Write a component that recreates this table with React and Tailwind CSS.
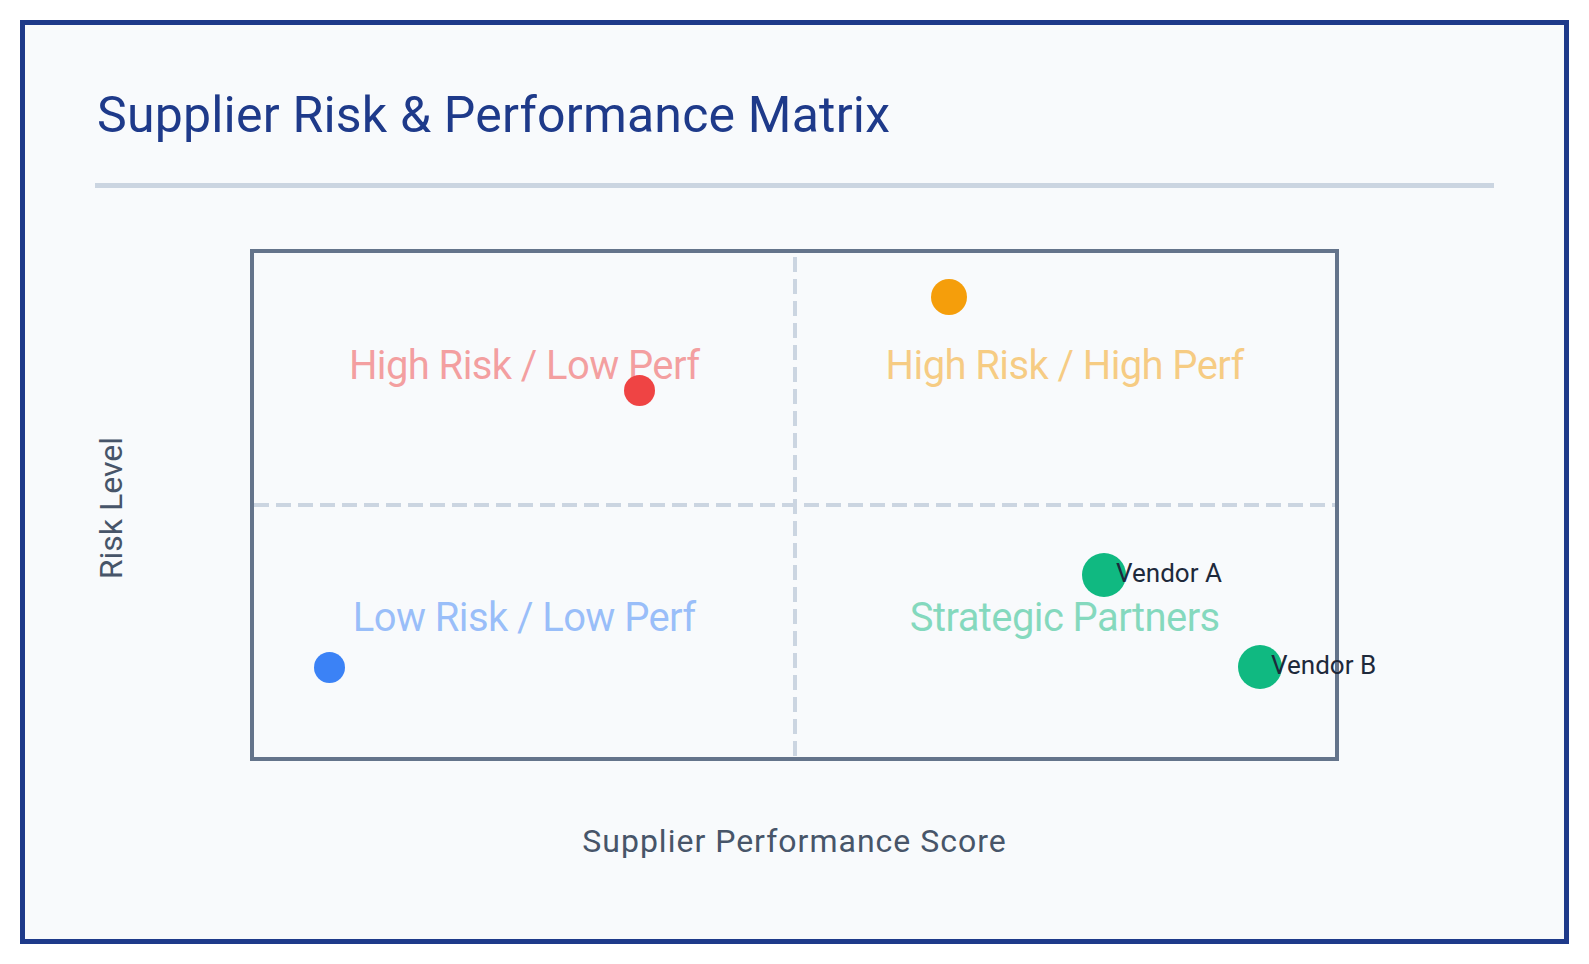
import React from "react";

const quadrants = [
  { label: "High Risk / Low Perf", color: "text-[#ef4444]/50" },
  { label: "High Risk / High Perf", color: "text-[#f59e0b]/50" },
  { label: "Low Risk / Low Perf", color: "text-[#3b82f6]/50" },
  { label: "Strategic Partners", color: "text-[#10b981]/50" },
];

// points are placed inside the chart's inner area (1081 x 504)
const points = [
  { id: "p1", dot: "left-[370px] top-[122px] size-[31px] bg-[#ef4444]" },
  { id: "p2", dot: "left-[677px] top-[26px] size-[36px] bg-[#f59e0b]" },
  { id: "p3", dot: "left-[60px] top-[399px] size-[31px] bg-[#3b82f6]" },
  {
    id: "va",
    dot: "left-[828px] top-[300px] size-[44px] bg-[#10b981]",
    name: "Vendor A",
    text: "left-[862px] top-[307px]",
  },
  {
    id: "vb",
    dot: "left-[984px] top-[392px] size-[44px] bg-[#10b981]",
    name: "Vendor B",
    text: "left-[1017px] top-[399px]",
  },
];

const App = () => {
  return (
    <div className="bg-white p-[20px] font-['Roboto',sans-serif]">
      <div className="h-[924px] border-[5px] border-[#1e3a8a] bg-[#f8fafc] px-[70px] pt-[65px]">
        <h1 className="pl-[2px] text-[50px] leading-none font-normal tracking-[0.2px] text-[#1e3a8a]">
          Supplier Risk &amp; Performance Matrix
        </h1>
        <div className="mt-[43px] h-[5px] bg-[#cbd5e1]" />

        <div className="mt-[61px] flex items-center">
          <div className="flex-1 flex items-center pt-[6px]">
            <span className="[writing-mode:vertical-rl] rotate-180 text-[32px] leading-[32px] text-[#475569] whitespace-nowrap">
              Risk Level
            </span>
          </div>

          <div className="relative w-[1089px] h-[512px] border-4 border-[#64748b]">
            <div className="grid grid-cols-2 grid-rows-2 h-full">
              {quadrants.map((q) => (
                <div key={q.label} className="flex items-center justify-center">
                  <span
                    className={`text-[40px] leading-none tracking-[-0.6px] mb-[27px] whitespace-nowrap ${q.color}`}
                  >
                    {q.label}
                  </span>
                </div>
              ))}
            </div>

            {/* quadrant dividers */}
            <div className="absolute left-0 right-0 top-1/2 -translate-y-1/2 h-[4px] bg-[repeating-linear-gradient(to_right,#cbd5e1_0_15px,transparent_15px_22px)]" />
            <div className="absolute top-[4px] bottom-0 left-1/2 -translate-x-1/2 w-[4px] bg-[repeating-linear-gradient(to_bottom,#cbd5e1_0_15px,transparent_15px_22px)]" />

            {points.map((p) => (
              <React.Fragment key={p.id}>
                <div className={`absolute rounded-full ${p.dot}`} />
                {p.name && (
                  <span
                    className={`absolute text-[26px] leading-[26px] text-[#1e293b] whitespace-nowrap ${p.text}`}
                  >
                    {p.name}
                  </span>
                )}
              </React.Fragment>
            ))}
          </div>

          <div className="flex-1" />
        </div>

        <p className="mt-[64px] text-center text-[32px] leading-none tracking-[1px] text-[#475569]">
          Supplier Performance Score
        </p>
      </div>
    </div>
  );
};

export default App;
